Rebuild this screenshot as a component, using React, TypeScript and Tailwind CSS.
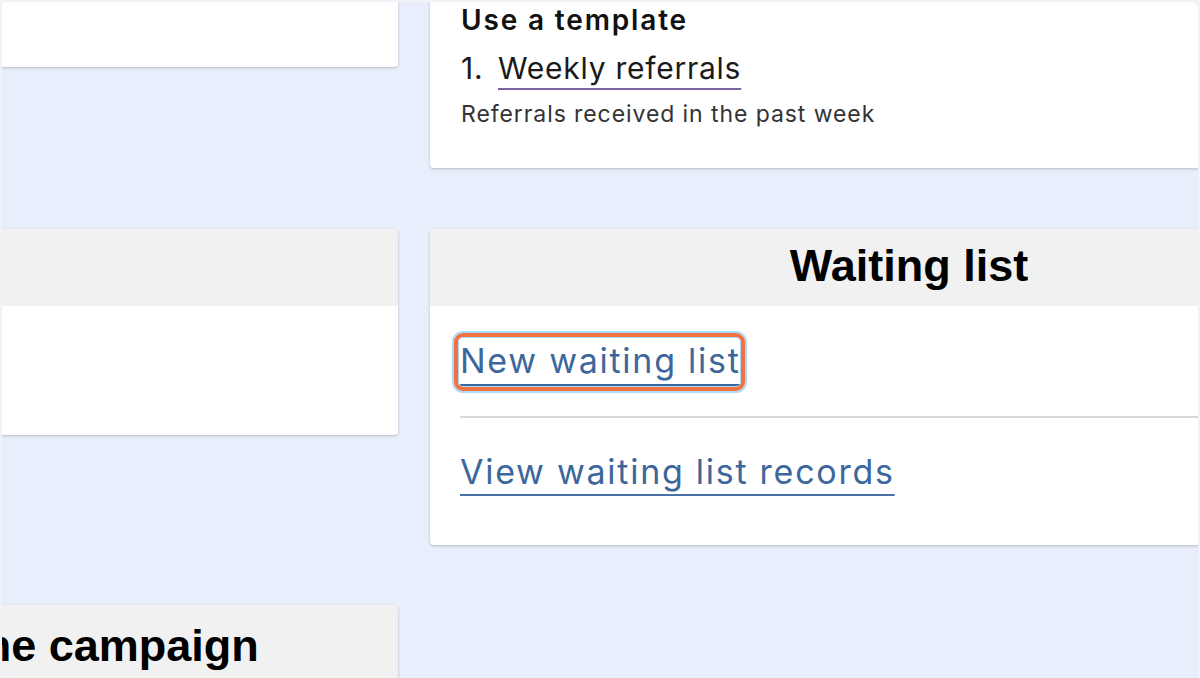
export default function App() {
  return (
    <div className="w-[1200px] h-[678px] bg-[#f2f3f7] pt-[2px] px-[2px] overflow-hidden">
      <div className="relative w-full h-full bg-[#e8eefb] rounded-tr-[8px] rounded-tl-[2px] overflow-hidden">
        <div className="flex gap-[32px] ml-[-562px] mt-[-60px]">
          {/* left column */}
          <div className="w-[958px] shrink-0 flex flex-col">
            <div className="h-[125px] bg-white rounded-[4px] shadow-[0_1px_3px_rgba(0,0,0,0.22)]" />
            <div className="mt-[162px] bg-white rounded-[4px] shadow-[0_1px_3px_rgba(0,0,0,0.22)] overflow-hidden">
              <div className="h-[77px] bg-[#f1f1f1]" />
              <div className="h-[129px]" />
            </div>
            <div className="mt-[170px] bg-white rounded-[4px] shadow-[0_1px_3px_rgba(0,0,0,0.22)] overflow-hidden">
              <div className="h-[77px] bg-[#f1f1f1] flex items-center justify-center pt-[4px] pr-[8px]">
                <h2 className="font-['Liberation_Sans',Arial,sans-serif] font-bold text-[45px] leading-none text-black">
                  Start a new telephone campaign
                </h2>
              </div>
              <div className="h-[129px]" />
            </div>
          </div>

          {/* right column */}
          <div className="w-[958px] shrink-0 flex flex-col gap-[61px]">
            <div className="h-[226px] bg-white rounded-[4px] shadow-[0_1px_3px_rgba(0,0,0,0.22)] flex flex-col justify-end px-[31px] pb-[40px] font-['Inter','Noto_Sans',sans-serif]">
              <h3 className="text-[28px] leading-[34px] font-semibold tracking-[0.066em] text-[#111]">Use a template</h3>
              <ol className="mt-[12px]">
                <li className="text-[30px] leading-[38px] tracking-[0.025em] text-[#1a1a1a]">
                  <span className="inline-block w-[37px]">1.</span>
                  <a className="underline decoration-[#7a65a0] decoration-2 underline-offset-[9px]">Weekly referrals</a>
                </li>
              </ol>
              <p className="mt-[13px] text-[23px] leading-[28px] tracking-[0.04em] text-[#333]">
                Referrals received in the past week
              </p>
            </div>

            <div className="bg-white rounded-[4px] shadow-[0_1px_3px_rgba(0,0,0,0.22)] overflow-hidden font-['Inter','Noto_Sans',sans-serif]">
              <div className="h-[77px] bg-[#f1f1f1] flex items-center justify-center pb-[4px]">
                <h2 className="font-['Liberation_Sans',Arial,sans-serif] font-bold text-[45px] leading-none text-black">Waiting list</h2>
              </div>
              <div className="px-[30px]">
                <div className="pt-[31px] pb-[31px] border-b-2 border-[#d9d9d9]">
                  <a className="relative inline-block text-[34px] leading-[48px] tracking-[0.051em] text-[#3c679c] underline decoration-[#3c679c] decoration-2 underline-offset-[11px]">
                    New waiting list
                    <span className="absolute -left-[6px] -right-[4px] -top-[4px] -bottom-[6px] rounded-[9px] border-4 border-[#f37041] shadow-[0_0_0_2px_#a9dcfb,inset_0_0_0_1px_#a9dcfb]" />
                  </a>
                </div>
                <div className="pt-[30px] pb-[49px]">
                  <a className="text-[34px] leading-[48px] tracking-[0.051em] text-[#3c679c] underline decoration-[#4a70a5] decoration-2 underline-offset-[10px]">
                    View waiting list records
                  </a>
                </div>
              </div>
            </div>
          </div>
        </div>
      </div>
    </div>
  );
}
